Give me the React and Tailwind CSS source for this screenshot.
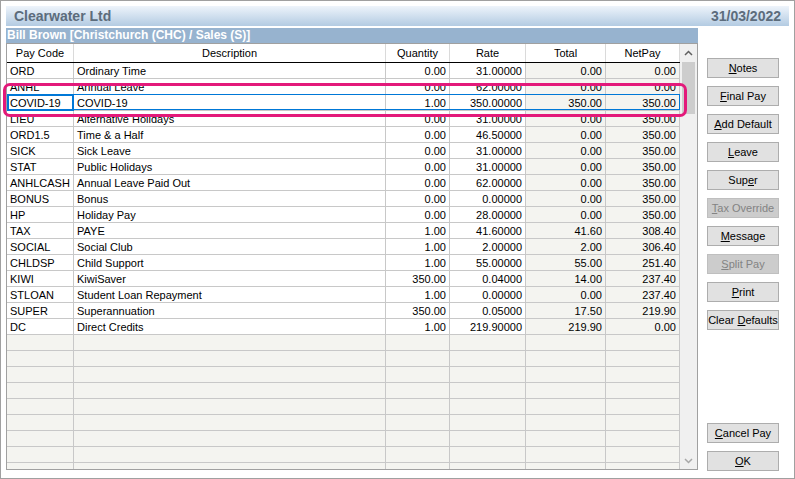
import React from 'react';

const rows = [
    ['ORD', 'Ordinary Time', '0.00', '31.00000', '0.00', '0.00'],
    ['ANHL', 'Annual Leave', '0.00', '62.00000', '0.00', '0.00'],
    ['COVID-19', 'COVID-19', '1.00', '350.00000', '350.00', '350.00'],
    ['LIEU', 'Alternative Holidays', '0.00', '31.00000', '0.00', '350.00'],
    ['ORD1.5', 'Time & a Half', '0.00', '46.50000', '0.00', '350.00'],
    ['SICK', 'Sick Leave', '0.00', '31.00000', '0.00', '350.00'],
    ['STAT', 'Public Holidays', '0.00', '31.00000', '0.00', '350.00'],
    ['ANHLCASH', 'Annual Leave Paid Out', '0.00', '62.00000', '0.00', '350.00'],
    ['BONUS', 'Bonus', '0.00', '0.00000', '0.00', '350.00'],
    ['HP', 'Holiday Pay', '0.00', '28.00000', '0.00', '350.00'],
    ['TAX', 'PAYE', '1.00', '41.60000', '41.60', '308.40'],
    ['SOCIAL', 'Social Club', '1.00', '2.00000', '2.00', '306.40'],
    ['CHLDSP', 'Child Support', '1.00', '55.00000', '55.00', '251.40'],
    ['KIWI', 'KiwiSaver', '350.00', '0.04000', '14.00', '237.40'],
    ['STLOAN', 'Student Loan Repayment', '1.00', '0.00000', '0.00', '237.40'],
    ['SUPER', 'Superannuation', '350.00', '0.05000', '17.50', '219.90'],
    ['DC', 'Direct Credits', '1.00', '219.90000', '219.90', '0.00'],
];

const cols = [
    { label: 'Pay Code', w: 'w-[67px]', align: 'text-left' },
    { label: 'Description', w: 'w-[312px]', align: 'text-left' },
    { label: 'Quantity', w: 'w-[64px]', align: 'text-right' },
    { label: 'Rate', w: 'w-[76px]', align: 'text-right' },
    { label: 'Total', w: 'w-[80px]', align: 'text-right' },
    { label: 'NetPay', w: 'w-[74px]', align: 'text-right' },
];

const Btn = ({ pre = '', u, post = '', disabled }) => (
    <button
        className={`w-[72px] h-[20px] border text-[11px] leading-none flex items-center justify-center ${disabled
            ? 'bg-[#cccccc] border-[#bfbfbf] text-[#838383]'
            : 'bg-[#e1e1e1] border-[#adadad] text-black'}`}
    >
        <span className="whitespace-pre">{pre}<span className="underline">{u}</span>{post}</span>
    </button>
);

const Row = ({ r, idx }) => {
    const selected = idx === 2;
    return (
        <div className="flex h-[16px] border-b border-[#c8c8c8] relative">
            {cols.map((c, i) => {
                const bg = r ? (i >= 4 ? 'bg-[#f4f4f0]' : 'bg-white') : 'bg-[#f4f4f0]';
                return (
                    <div
                        key={i}
                        className={`${c.w} ${c.align} ${bg} shrink-0 h-full border-r border-[#c8c8c8] px-[3px] text-[11px] leading-[16px] whitespace-nowrap overflow-hidden`}
                    >
                        {r ? r[i] : ''}
                    </div>
                );
            })}
            {selected && (
                <>
                    <div className="absolute inset-[-1px_0_0_0] border border-[#0078d7] pointer-events-none" />
                    <div className="absolute left-0 top-[-1px] w-[67px] h-[17px] border-2 border-[#0078d7] pointer-events-none" />
                </>
            )}
        </div>
    );
};

const App = () => {
    const empty = Array.from({ length: 9 });
    return (
        <div className="w-[795px] h-[479px] relative bg-white border border-[#a0a0a0] p-[5px] font-['Liberation_Sans',Arial,sans-serif] text-black overflow-hidden">
            <div className="h-[20px] flex items-center justify-between px-[8px] bg-gradient-to-b from-[#eef4fb] to-[#b3cbe2]">
                <span className="text-[14px] font-bold text-[#5c6c7c]">Clearwater Ltd</span>
                <span className="text-[14px] font-bold text-[#5c6c7c]">31/03/2022</span>
            </div>

            <div className="flex mt-[2px]">
                <div className="w-[692px] shrink-0">
                    <div className="h-[15px] bg-[#97b3cf] text-white text-[12px] font-bold leading-[15px] px-[1px] whitespace-nowrap">
                        Bill Brown [Christchurch (CHC) / Sales (S)]
                    </div>
                    <div className="h-[427px] border border-[#a0a0a0] flex overflow-hidden">
                        <div className="w-[673px] shrink-0">
                            <div className="flex h-[19px] border-b border-black bg-white">
                                {cols.map((c, i) => (
                                    <div key={i} className={`${c.w} shrink-0 h-full border-r border-[#dadada] text-center text-[11px] leading-[18px]`}>
                                        {c.label}
                                    </div>
                                ))}
                            </div>
                            {rows.map((r, i) => <Row key={i} r={r} idx={i} />)}
                            {empty.map((_, i) => <Row key={`e${i}`} r={null} idx={-1} />)}
                        </div>
                        <div className="w-[17px] shrink-0 bg-[#f0f0f0] flex flex-col items-center">
                            <div className="h-[18px] flex items-center justify-center">
                                <svg width="9" height="6" viewBox="0 0 9 6">
                                    <path d="M1 5 L4.5 1.5 L8 5" fill="none" stroke="#606060" strokeWidth="1.5" />
                                </svg>
                            </div>
                            <div className="w-[13px] h-[52px] bg-[#cdcdcd]" />
                            <div className="flex-1" />
                            <div className="h-[17px] flex items-center justify-center">
                                <svg width="9" height="6" viewBox="0 0 9 6">
                                    <path d="M1 1 L4.5 4.5 L8 1" fill="none" stroke="#a8a8a8" strokeWidth="1.5" />
                                </svg>
                            </div>
                        </div>
                    </div>
                </div>

                <div className="flex flex-col pl-[9px] pt-[30px] h-[443px]">
                    <div className="flex flex-col gap-[8px]">
                        <Btn u="N" post="otes" />
                        <Btn u="F" post="inal Pay" />
                        <Btn u="A" post="dd Default" />
                        <Btn u="L" post="eave" />
                        <Btn pre="Sup" u="e" post="r" />
                        <Btn u="T" post="ax Override" disabled />
                        <Btn u="M" post="essage" />
                        <Btn u="S" post="plit Pay" disabled />
                        <Btn u="P" post="rint" />
                        <Btn pre="Clear " u="D" post="efaults" />
                    </div>
                    <div className="flex-1" />
                    <div className="flex flex-col gap-[8px]">
                        <Btn u="C" post="ancel Pay" />
                        <Btn u="O" post="K" />
                    </div>
                </div>
            </div>

            <div className="absolute left-[2px] top-[82px] w-[684px] h-[34px] border-[3px] border-[#e3197a] rounded-[7px] pointer-events-none" />
        </div>
    );
};

export default App;
